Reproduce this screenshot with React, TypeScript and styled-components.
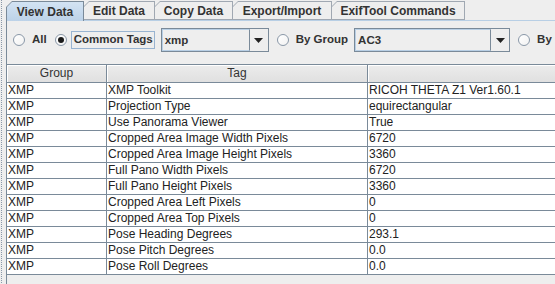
import React from "react";
import styled, { createGlobalStyle } from "styled-components";

const Global = createGlobalStyle`
  html, body { margin: 0; padding: 0; background: #eeeeee; }
  body { font-family: "Liberation Sans", Arial, sans-serif; color: #333333; overflow: hidden; }
`;

const Frame = styled.div`
  display: flex;
  width: 555px;
  height: 284px;
  overflow: hidden;
  background: #eeeeee;
`;

const Divider = styled.div`
  flex: 0 0 6px;
  background-image: repeating-linear-gradient(
    to bottom,
    #8a98a8 0px,
    #8a98a8 1px,
    transparent 1px,
    transparent 2px
  );
  background-size: 1px 100%;
  background-repeat: no-repeat;
  background-position: 1px 0;
`;

const Panel = styled.div`
  flex: 1;
  display: flex;
  flex-direction: column;
  min-width: 0;
`;

const TabBar = styled.div`
  display: flex;
  padding-top: 1px;
  padding-left: 1px;
  box-sizing: border-box;
  height: 20px;
`;

const Tab = styled.div<{ $w: number; $sel?: boolean }>`
  position: relative;
  width: ${(p) => p.$w}px;
  height: ${(p) => (p.$sel ? 20 : 19)}px;
  margin-left: -1px;
  box-sizing: border-box;
  font-weight: bold;
  font-size: 12px;
  color: #333333;
  display: flex;
  align-items: center;
  justify-content: center;
  padding-top: 1px;
  z-index: ${(p) => (p.$sel ? 2 : 1)};
  &::before {
    content: "";
    position: absolute;
    inset: 0;
    background: ${(p) => (p.$sel ? "#7a8a99" : "#a0a8b2")};
    clip-path: polygon(6px 0, 100% 0, 100% 100%, 0 100%, 0 6px);
    z-index: -2;
  }
  &::after {
    content: "";
    position: absolute;
    inset: 1px 1px ${(p) => (p.$sel ? 0 : 1)}px 1px;
    background: ${(p) =>
      p.$sel ? "linear-gradient(#d3e3f3, #bcd2e8)" : "#eeeeee"};
    clip-path: polygon(5px 0, 100% 0, 100% 100%, 0 100%, 0 5px);
    z-index: -1;
  }
`;

const Content = styled.div`
  flex: 1;
  border-top: 1px solid #b8cfe5;
  border-left: 1px solid #7a8a99;
  display: flex;
  flex-direction: column;
`;

const OptionRow = styled.div`
  display: flex;
  align-items: center;
  height: 24px;
  margin-top: 7px;
  padding-left: 6px;
  white-space: nowrap;
`;

const Radio = styled.label<{ $gap: number }>`
  display: flex;
  align-items: center;
  margin-right: ${(p) => p.$gap}px;
  font-size: 11.5px;
  font-weight: bold;
  color: #333333;
`;

const Circle = styled.span<{ $on?: boolean }>`
  width: 12px;
  height: 12px;
  box-sizing: border-box;
  border-radius: 50%;
  border: 1px solid #8a98a8;
  background: linear-gradient(135deg, #ffffff, #f2f2f2);
  display: flex;
  align-items: center;
  justify-content: center;
  margin-right: 4px;
  flex-shrink: 0;
  &::after {
    content: "";
    display: ${(p) => (p.$on ? "block" : "none")};
    width: 6px;
    height: 6px;
    border-radius: 50%;
    background: #1a1a1a;
  }
`;

const RadioText = styled.span<{ $focus?: boolean }>`
  padding: 1px 1px 2px 2px;
  border: 1px solid ${(p) => (p.$focus ? "#99b4d1" : "transparent")};
  line-height: 13px;
`;

const Combo = styled.div<{ $w: number }>`
  width: ${(p) => p.$w}px;
  height: 24px;
  box-sizing: border-box;
  display: flex;
  border: 1px solid #7a8a99;
  background: #eeeeee;
  margin-right: 8px;
  flex-shrink: 0;
`;

const ComboText = styled.div`
  flex: 1;
  border: 1px solid #b8cfe5;
  border-right: 1px solid #7a8a99;
  padding-left: 2px;
  font-size: 11.5px;
  font-weight: bold;
  color: #333333;
  display: flex;
  align-items: center;
`;

const ComboArrow = styled.div`
  width: 18px;
  display: flex;
  align-items: center;
  justify-content: center;
`;

const TableWrap = styled.div`
  margin-top: 12px;
  display: grid;
  grid-template-columns: 100px 261px 200px;
  align-content: start;
  background: #eeeeee;
`;

const HeadCell = styled.div`
  height: 19px;
  box-sizing: border-box;
  border-top: 1px solid #7a8a99;
  border-bottom: 1px solid #7a8a99;
  border-right: 1px solid #7a8a99;
  box-shadow: inset 1px 1px 0 #ffffff;
  background: linear-gradient(#ececec, #e0e0e0);
  font-size: 12px;
  color: #333333;
  text-align: center;
  line-height: 17px;
`;

const Cell = styled.div`
  height: 16px;
  box-sizing: border-box;
  border-bottom: 1px solid #7a8a99;
  border-right: 1px solid #7a8a99;
  background: #ffffff;
  font-size: 12px;
  color: #222222;
  line-height: 15px;
  padding-left: 1px;
  white-space: nowrap;
  overflow: hidden;
`;

const rows: [string, string][] = [
  ["XMP Toolkit", "RICOH THETA Z1 Ver1.60.1"],
  ["Projection Type", "equirectangular"],
  ["Use Panorama Viewer", "True"],
  ["Cropped Area Image Width Pixels", "6720"],
  ["Cropped Area Image Height Pixels", "3360"],
  ["Full Pano Width Pixels", "6720"],
  ["Full Pano Height Pixels", "3360"],
  ["Cropped Area Left Pixels", "0"],
  ["Cropped Area Top Pixels", "0"],
  ["Pose Heading Degrees", "293.1"],
  ["Pose Pitch Degrees", "0.0"],
  ["Pose Roll Degrees", "0.0"],
];

const Arrow = () => (
  <svg width="9" height="5" viewBox="0 0 9 5">
    <polygon points="0,0 9,0 4.5,5" fill="#222" />
  </svg>
);

export default function App() {
  return (
    <Frame>
      <Global />
      <Divider />
      <Panel>
        <TabBar>
          <Tab $w={78} $sel>View Data</Tab>
          <Tab $w={72}>Edit Data</Tab>
          <Tab $w={79}>Copy Data</Tab>
          <Tab $w={100}>Export/Import</Tab>
          <Tab $w={134}>ExifTool Commands</Tab>
        </TabBar>
        <Content>
          <OptionRow>
            <Radio $gap={6}>
              <Circle />
              <RadioText>All</RadioText>
            </Radio>
            <Radio $gap={6}>
              <Circle $on />
              <RadioText $focus>Common Tags</RadioText>
            </Radio>
            <Combo $w={108}>
              <ComboText>xmp</ComboText>
              <ComboArrow>
                <Arrow />
              </ComboArrow>
            </Combo>
            <Radio $gap={4}>
              <Circle />
              <RadioText>By Group</RadioText>
            </Radio>
            <Combo $w={156}>
              <ComboText>AC3</ComboText>
              <ComboArrow>
                <Arrow />
              </ComboArrow>
            </Combo>
            <Radio $gap={0}>
              <Circle />
              <RadioText>By Category</RadioText>
            </Radio>
          </OptionRow>
          <TableWrap>
            <HeadCell>Group</HeadCell>
            <HeadCell>Tag</HeadCell>
            <HeadCell></HeadCell>
            {rows.map(([t, v]) => (
              <React.Fragment key={t}>
                <Cell>XMP</Cell>
                <Cell>{t}</Cell>
                <Cell>{v}</Cell>
              </React.Fragment>
            ))}
          </TableWrap>
        </Content>
      </Panel>
    </Frame>
  );
}
